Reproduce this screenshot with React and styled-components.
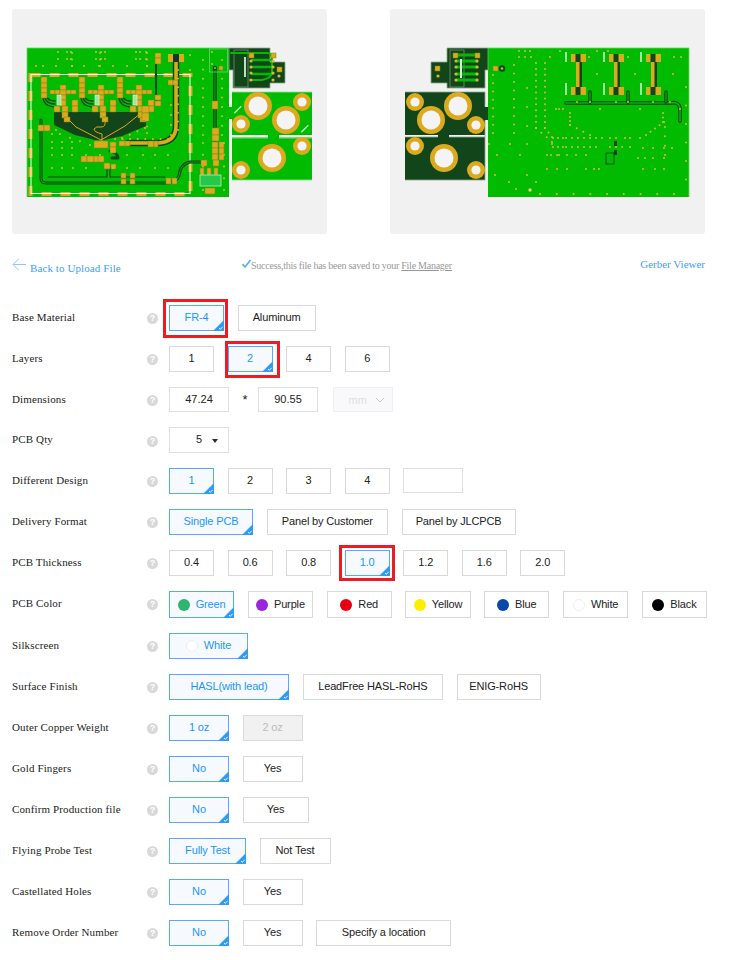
import styled, { createGlobalStyle } from 'styled-components';

const GOLD = '#dcaa1e';
const DARK = '#12451a';
const GREEN = '#01bb01';

const GlobalStyle = createGlobalStyle`
  body {
    margin: 0;
    background: #fff;
    font-family: "Liberation Serif", serif;
  }
`;

const Page = styled.div`
  width: 729px;
`;

const Previews = styled.div`
  display: flex;
  gap: 63px;
  padding: 9px 12px 0;
`;

const Preview = styled.div`
  width: 315px;
  height: 225px;
  background: #f1f1f1;
  border-radius: 3px;
  overflow: hidden;
  svg {
    display: block;
    filter: blur(0.5px);
  }
`;

const Notice = styled.div`
  display: grid;
  grid-template-columns: 230px 1fr auto;
  height: 71px;
  padding: 0 24px 0 12px;
  font-size: 11px;
  line-height: 14px;
`;

const BackLink = styled.a`
  display: flex;
  align-items: flex-start;
  gap: 3px;
  padding-top: 24px;
  color: #3f9dfb;
  letter-spacing: 0.1px;
  span {
    padding-top: 3px;
  }
`;

const Success = styled.div`
  display: flex;
  align-items: flex-start;
  padding-top: 24px;
  color: #999;
  svg {
    margin-top: 1px;
    flex: none;
  }
  span {
    padding-top: 1px;
    font-size: 10px;
    white-space: nowrap;
    letter-spacing: -0.25px;
  }
`;

const GerberLink = styled.a`
  padding-top: 23px;
  color: #3f9dfb;
`;

const Form = styled.div`
  padding-left: 12px;
`;

const Row = styled.div`
  display: flex;
  align-items: flex-start;
  height: ${(p) => p.$h || 41}px;
`;

const Label = styled.div`
  width: 135px;
  flex: none;
  height: 25px;
  line-height: 25px;
  font-size: 11px;
  letter-spacing: 0.13px;
  color: #222;
  white-space: nowrap;
`;

const Help = styled.span`
  flex: none;
  width: 11px;
  height: 11px;
  margin: ${(p) => p.$top || 8}px 11px 0 0;
  border-radius: 50%;
  background: #d9d9d9;
  color: #fff;
  font: bold 9px/11px "Liberation Sans", sans-serif;
  text-align: center;
`;

const Options = styled.div`
  display: flex;
  align-items: flex-start;
  gap: 13.55px;
`;

const Option = styled.div`
  position: relative;
  box-sizing: border-box;
  flex: none;
  display: flex;
  align-items: center;
  justify-content: center;
  gap: 6px;
  width: ${(p) => p.$w}px;
  height: ${(p) => (p.$tall ? 27 : 26)}px;
  padding-bottom: 2px;
  font: 11px "Liberation Sans", sans-serif;
  letter-spacing: -0.15px;
  white-space: nowrap;
  border: 1px solid ${(p) => (p.$active ? '#5aa9f8' : '#d9d9d9')};
  background: ${(p) => (p.$active ? '#f6faff' : p.$off ? '#f1f1f1' : '#fff')};
  color: ${(p) => (p.$active ? '#1b96fb' : p.$off ? '#bbb' : '#222')};
`;

const Corner = styled.svg`
  position: absolute;
  right: -1px;
  bottom: -1px;
`;

const Marker = styled.span`
  position: absolute;
  inset: ${(p) => p.$inset};
  border: 3px solid #ed1c24;
  pointer-events: none;
`;

const Dot = styled.i`
  flex: none;
  box-sizing: border-box;
  width: 12px;
  height: 12px;
  margin-top: 2px;
  border-radius: 50%;
  background: ${(p) => p.$color};
  border: ${(p) => (p.$color === '#fff' ? '1px solid #eee' : 'none')};
`;

const Field = styled.input`
  box-sizing: border-box;
  flex: none;
  width: 60px;
  height: 25px;
  padding: 0 0 1px;
  border: 1px solid #dcdfe6;
  border-radius: 0;
  outline: none;
  background: #fff;
  color: #222;
  font: 11px "Liberation Sans", sans-serif;
  text-align: center;
`;

const Times = styled.span`
  flex: 0 0 1.9px;
  min-width: 0;
  margin-top: 6px;
  font: 13px/14px "Liberation Sans", sans-serif;
  color: #222;
`;

const UnitSelect = styled.div`
  box-sizing: border-box;
  flex: none;
  display: flex;
  align-items: center;
  justify-content: space-between;
  width: 60px;
  height: 25px;
  margin-left: 1px;
  padding: 0 7px 0 15px;
  border: 1px solid #f0f0f4;
  background: #f9f9fb;
  color: #ddd;
  font: 11px "Liberation Sans", sans-serif;
`;

const QtySelect = styled.div`
  box-sizing: border-box;
  display: flex;
  align-items: center;
  width: 60px;
  height: 26px;
  padding: 0 10px 2px 26px;
  justify-content: space-between;
  border: 1px solid #dcdfe6;
  font: 11px "Liberation Sans", sans-serif;
  color: #222;
  &::after {
    content: '';
    border-left: 3.5px solid transparent;
    border-right: 3.5px solid transparent;
    border-top: 4px solid #2c2c3a;
    margin-top: 3px;
  }
`;

const Tick = () => (
  <Corner width="11" height="11" viewBox="0 0 11 11">
    <polygon points="11,0 11,11 0,11" fill="#2f9bf8" />
    <polyline points="6,8 7.4,9.3 9.6,6.8" fill="none" stroke="#fff" strokeWidth="0.9" />
  </Corner>
);

const Choice = ({ w, active, off, tall, mark, children }) => (
  <Option $w={w} $active={active} $off={off} $tall={tall}>
    {children}
    {active && <Tick />}
    {mark && <Marker $inset={mark} />}
  </Option>
);

// page coordinates are used inside the artwork: viewBox starts at the card corner
const spread = (x1, y1, x2, y2, n) =>
  Array.from({ length: n }, (_, i) => [x1 + ((x2 - x1) * i) / (n - 1), y1 + ((y2 - y1) * i) / (n - 1)]);

const Pads = ({ list, fill = GOLD }) => (
  <g fill={fill} stroke="#6f8a12" strokeWidth="0.5">
    {list.map(([x, y, w, h]) => (
      <rect key={`${x}-${y}-${w}-${h}`} x={x} y={y} width={w} height={h} />
    ))}
  </g>
);

const Vias = ({ pts, r = 1 }) => (
  <g fill="#d8b73c">
    {pts.map(([x, y], i) => (
      <circle key={i} cx={x} cy={y} r={r} />
    ))}
  </g>
);

const Trace = ({ d, w = 1.4, color = DARK }) => (
  <path d={d} fill="none" stroke={color} strokeWidth={w} strokeLinejoin="round" strokeLinecap="round" />
);

const Hole = ({ x, y, big }) => (
  <g>
    <circle cx={x} cy={y} r={big ? 14 : 9} fill={GOLD} />
    <circle cx={x} cy={y} r={big ? 9.5 : 4.6} fill="#f4f4f4" />
  </g>
);

const frontPads = [
  [155, 53, 6, 5], [155, 58, 6, 6],
  [168, 80, 5, 5], [173, 80, 5, 5],
  [155, 95, 6, 5], [155, 101, 6, 5],
  [38, 125, 6, 6], [44, 125, 6, 6],
  [142, 106, 7, 7], [142, 113, 7, 8],
  [110, 142, 6, 5], [110, 147, 6, 6], [119, 141, 7, 5], [125, 141, 5, 5], [148, 141, 6, 6], [154, 141, 4, 6],
  [94, 141, 14, 7],
  [81, 156, 6, 6], [87, 156, 7, 6], [94, 156, 7, 6], [98, 156, 6, 6],
  [104, 163, 6, 6], [111, 164, 5, 5],
  [121, 173, 5, 5], [130, 173, 5, 5], [121, 179, 5, 5], [130, 179, 5, 5],
  [166, 178, 5, 6], [172, 178, 5, 6],
  [201, 160, 6, 6], [200, 168, 4, 7], [207, 168, 4, 7], [214, 168, 4, 7],
  [205, 188, 10, 6],
  [212, 101, 6, 8],
  [212, 128, 7, 7], [212, 135, 7, 6],
  [212, 142, 6, 6], [219, 142, 5, 6], [212, 148, 6, 6], [219, 148, 5, 6], [212, 154, 6, 6], [219, 154, 5, 6], [213, 160, 6, 6],
];

const clusterPads = (dx) => [
  [41 + dx, 77, 6, 6], [41 + dx, 83, 6, 5], [41 + dx, 88, 6, 5], [41 + dx, 93, 6, 5],
  [50 + dx, 90, 5, 4], [55 + dx, 90, 5, 4], [66 + dx, 90, 5, 4], [71 + dx, 90, 5, 4],
  [60 + dx, 85, 6, 5], [60 + dx, 90, 6, 5], [60 + dx, 95, 6, 5], [60 + dx, 100, 6, 6],
  [54 + dx, 106, 6, 6], [62 + dx, 106, 6, 6],
  [72 + dx, 100, 6, 6], [72 + dx, 106, 6, 6],
  [62 + dx, 112, 6, 6], [64 + dx, 117, 6, 5],
];

const frontVias = [
  ...[52, 59].flatMap((y) => [58, 67, 71, 96, 101, 105, 136, 140, 146].map((x) => [x, y])),
  ...[36, 43, 56, 72, 84, 99, 113, 127, 147].map((x) => [x, 66]),
  ...spread(72, 53, 72, 66, 3), ...spread(100, 53, 100, 66, 3), ...spread(147, 53, 147, 66, 3),
  ...[52, 62, 72, 86, 100, 127, 143, 155, 168].map((x) => [x, 155]),
  ...[52, 62, 72].map((x) => [x, 142]), ...[52, 62, 72].map((x) => [x, 148]),
  ...[52, 62, 73, 86, 113, 127, 140, 155, 168].map((x) => [x, 168]),
  ...spread(115, 139, 168, 139, 8),
  ...spread(178, 70, 178, 130, 8), ...spread(171, 105, 171, 135, 4),
  ...spread(203, 60, 203, 135, 9), ...spread(222, 60, 222, 135, 9),
  ...spread(203, 143, 203, 190, 5), ...spread(224, 143, 224, 190, 5),
  ...spread(190, 55, 190, 70, 2), ...spread(212, 52, 212, 64, 2),
  ...spread(52, 134, 56, 130, 2), ...spread(147, 120, 147, 133, 3),
  ...spread(60, 134, 90, 145, 4), ...spread(122, 138, 145, 128, 4),
];

const FrontBoard = () => (
  <svg width="315" height="225" viewBox="12 9 315 225">
    <rect x="27" y="48" width="202" height="149" fill={GREEN} />
    <path d="M27 197V48H229" fill="none" stroke="#5fdc5f" strokeWidth="0.8" />
    <rect x="30.5" y="75" width="160" height="119" fill="none" stroke={GOLD} strokeWidth="4" strokeDasharray="10 9" />
    <rect x="31" y="74.5" width="159" height="119" fill="none" stroke="#fff" strokeWidth="1" />

    <polygon points="54,112 146,112 146,126 122,136 104,140 95,140 75,135 54,125" fill={DARK} />
    <Trace d="M101 140 L76 127 L62 113" color={GOLD} w="1" />
    <Trace d="M101 140 L125 126 L141 113" color={GOLD} w="1" />
    <Trace d="M102 140 V134 Q94 132 94 129 Q96 126 101 127 Q106 127 105 121 V113" color={GOLD} w="1" />

    {[0, 38, 76].map((dx) => (
      <g key={dx}>
        <Trace d={`M${43 + dx} 98 Q${44 + dx} 106 ${54 + dx} 107`} />
        <Trace d={`M${45 + dx} 98 Q${47 + dx} 104 ${55 + dx} 104`} />
        <Trace d={`M${47 + dx} 98 Q${50 + dx} 101 ${55 + dx} 101`} />
        <Pads list={clusterPads(dx)} />
        <rect x={57 + dx} y="95" width="4" height="10" fill="#9fe59f" stroke="#e8f8e8" strokeWidth="0.6" />
      </g>
    ))}

    <Trace d="M41 120 V178 Q41 183 46 183 H166 Q176 183 179 176 Q180 164 190 162 H204" w="3" />
    <Trace d="M41 120 V178 Q41 183 46 183 H166 Q176 183 179 176 Q180 164 190 162 H204" w="1.2" color="#08a008" />
    <Trace d="M107 168 V177 H48" w="1.2" />
    <Trace d="M110 169 V177 H165" w="1.2" />
    <Trace d="M156 60 V100" w="2" />
    <Trace d="M215 68 V140" w="3.6" />
    <Trace d="M215 68 V140" w="1.2" color="#08a008" />
    <Trace d="M176 58 V126 Q176 142 158 143 H128" w="6.5" />
    <Trace d="M176 58 V126 Q176 142 158 143 H128" w="3.5" color={GOLD} />
    <rect x="168" y="54" width="16" height="8" fill={GOLD} />
    <rect x="173" y="54" width="6" height="8" fill="#10391a" />
    <Trace d="M112 158 H118 Q117 152 110 151" w="3" />

    <Pads list={frontPads} />
    <Vias pts={frontVias} />

    <rect x="200" y="175" width="21" height="11" fill="#25c849" stroke="#b8eec0" strokeWidth="0.8" />
    <rect x="209.5" y="49" width="18" height="23" fill="none" stroke="#6edf6e" strokeWidth="0.7" />
    <circle cx="215" cy="68" r="2.2" fill={DARK} />
    <circle cx="215" cy="68" r="1" fill={GOLD} />
    <Pads list={[[219, 66, 4, 4]]} />

    {/* breakaway tab, top right */}
    <path d="M229 48H270V62H285V83H270V88H233V70H229Z" fill={DARK} stroke="#8aa98a" strokeWidth="0.8" />
    <rect x="234" y="50" width="14" height="37" fill="none" stroke="#7e9a7e" strokeWidth="0.7" />
    <Trace d="M231 53H268Q272 53 272 62V72Q272 78 262 80H250" w="2" color={GREEN} />
    {[60, 67, 74].map((y) => (
      <Trace key={y} d={`M252 ${y}H272`} w="2.4" color={GREEN} />
    ))}
    <Pads list={[[249, 53, 5, 5], [271, 53, 5, 5], [277, 67, 5, 5]]} />
    <Vias pts={[[251, 61], [251, 67], [251, 73], [251, 80], [273, 61], [273, 67], [273, 73], [273, 80], [279, 76]]} r="1.6" />
    <rect x="244" y="57" width="2" height="20" fill="#bfe0bf" />

    {/* round hole coupons */}
    <rect x="232" y="92" width="80" height="88" fill={GREEN} />
    <rect x="229" y="107" width="3" height="12" fill={GREEN} />
    <rect x="232" y="135" width="36" height="2.5" fill="#f1f1f1" />
    <rect x="279" y="135" width="33" height="2.5" fill="#f1f1f1" />
    <path d="M232 92H312M232 180H312M232 138H268M279 138H312" stroke="#8be48b" strokeWidth="0.8" />
    <Hole x={258} y={106} big />
    <Hole x={286} y={120} big />
    <Hole x={302} y={102} />
    <Hole x={241} y={124} />
    <Hole x={272} y={158} big />
    <Hole x={302} y={146} />
    <Hole x={241} y={170} />
    <rect x="233" y="109" width="10" height="1.4" fill="#bdeebd" transform="rotate(-45 238 110)" />
    <rect x="300" y="128" width="10" height="1.4" fill="#bdeebd" transform="rotate(-45 305 129)" />
  </svg>
);

const backVias = [
  ...spread(536, 63, 536, 128, 12), ...spread(545, 63, 545, 128, 12),
  ...spread(536, 128, 552, 142, 4), ...spread(545, 128, 552, 137, 3),
  ...[553, 558, 563, 566, 572, 578, 584, 590, 596].flatMap((x) => [[x, 138], [x, 147]]),
  ...[602, 610, 616, 625, 630, 640].map((x) => [x, 138]),
  ...[610, 616, 622, 630].map((x) => [x, 147]),
  ...spread(570, 113, 570, 125, 4), ...spread(570, 125, 590, 135, 4),
  ...spread(663, 113, 663, 122, 3), ...spread(664, 122, 646, 135, 5),
  ...spread(665, 127, 665, 155, 4),
  ...spread(493, 75, 493, 133, 8), ...spread(514, 65, 514, 133, 9),
  ...[527, 527, 527].map((x, i) => [x, 88 + i * 19]),
  ...[489, 510, 527, 552].map((x) => [x, 144]),
  ...[547, 557, 567, 576, 586].map((x) => [x, 155]),
  ...[547, 557, 567, 586, 594, 599].map((x) => [x, 169]),
  ...[643, 653, 664, 672].map((x) => [x, 148]),
  ...[638, 645, 653, 664].map((x) => [x, 158]),
  ...[643, 655, 664].map((x) => [x, 169]),
  ...[497, 520, 551, 559].map((x) => [x, 155]),
  ...[495, 509, 516, 527, 536].map((x, i) => [x, 175 + (i % 3) * 7]),
  ...spread(540, 194, 674, 194, 9),
  ...[686, 686, 686, 686, 686, 686].map((x, i) => [x, 87 + i * 18.5]),
  ...[519, 525, 530, 560, 597, 608].map((x) => [x, 51]),
  ...[519, 525, 531, 550, 589, 628, 674, 681].map((x) => [x, 57]),
  ...[597, 635, 673].map((x) => [x, 74]),
  ...[556, 559, 563, 600, 640, 680].map((x) => [x, 109]),
  ...[577, 616, 653, 590, 628, 670].map((x) => [x, 102]),
];

const backColumns = [578, 616, 653];

const BackBoard = () => (
  <svg width="315" height="225" viewBox="390 9 315 225">
    <rect x="488" y="48" width="201" height="149" fill={GREEN} />
    <path d="M488 48H689V197" fill="none" stroke="#5fdc5f" strokeWidth="0.8" />

    <Trace d="M566 103H670Q680 101 680 110V121" w="3.6" />
    <Trace d="M566 103H670Q680 101 680 110V121" w="1.6" color="#08b008" />
    {[590, 628, 666].map((x) => (
      <g key={x}>
        <Trace d={`M${x} 92V102`} w="3.5" />
        <Trace d={`M${x} 92V102`} w="1.2" color="#08b008" />
      </g>
    ))}
    <rect x="606" y="153" width="8" height="11" fill="none" stroke={DARK} strokeWidth="0.9" />
    <rect x="614" y="141" width="3" height="5" fill={DARK} />
    <rect x="614" y="150" width="3" height="5" fill={DARK} />

    {backColumns.map((x) => (
      <g key={x}>
        <rect x={x - 1} y="60" width="5" height="28" fill={DARK} />
        <rect x={x - 2} y="60" width="3.5" height="28" fill={GOLD} />
        <rect x={x - 7} y="54" width="15" height="8" fill={GOLD} />
        <rect x={x - 7} y="87" width="15" height="8" fill={GOLD} />
        <rect x={x - 2.5} y="54" width="5" height="8" fill={DARK} />
        <rect x={x - 2.5} y="87" width="5" height="8" fill={DARK} />
        <rect x={x - 13} y="52" width="2" height="10" fill="#d8f6d8" opacity="0.75" />
        <rect x={x - 13} y="83" width="2" height="12" fill="#d8f6d8" opacity="0.75" />
      </g>
    ))}

    <Vias pts={backVias} />
    <Pads list={[[493, 66, 5, 5]]} />
    <circle cx="502" cy="68.5" r="3.2" fill={DARK} />
    <circle cx="502" cy="68.5" r="1.3" fill={GOLD} />
    <circle cx="530" cy="190" r="1.7" fill="#f1d678" />

    {/* breakaway tab, top left */}
    <path d="M488 48H447V62H431V83H447V88H485V70H488Z" fill={DARK} stroke="#8aa98a" strokeWidth="0.8" />
    <rect x="450" y="50" width="14" height="37" fill="none" stroke="#7e9a7e" strokeWidth="0.7" />
    {[55, 61, 67, 74, 80].map((y) => (
      <Trace key={y} d={`M457 ${y}H477`} w="3" color={GREEN} />
    ))}
    <Pads list={[[453, 53, 5, 5], [475, 53, 5, 5], [435, 66, 5, 5]]} />
    <Vias pts={[[456, 61], [456, 67], [456, 74], [456, 80], [477, 61], [477, 67], [477, 74], [477, 80], [438, 76]]} r="1.6" />
    <rect x="460" y="59" width="2" height="19" fill="#d6efd6" />

    {/* round hole coupons */}
    <path d="M405 92H485V107H488V120H485V135H449V137H485V180H405V137H438V135H405Z" fill={DARK} />
    <path d="M405 92H485V107M485 120V180H405M405 137H438M449 137H485" fill="none" stroke="#8aa98a" strokeWidth="0.8" />
    <Hole x={458} y={106} big />
    <Hole x={431} y={120} big />
    <Hole x={415} y={102} />
    <Hole x={476} y={125} />
    <Hole x={415} y={146} />
    <Hole x={444} y={158} big />
    <Hole x={476} y={170} />
  </svg>
);

const colors = [
  ['Green', '#2fb36d', true],
  ['Purple', '#9b26d9'],
  ['Red', '#e60012'],
  ['Yellow', '#ffee00'],
  ['Blue', '#0a47a6'],
  ['White', '#fff'],
  ['Black', '#000'],
];

const simpleRows = {
  'Base Material': [
    { text: 'FR-4', w: 55, active: true, mark: '-7px -5px -8px -7px' },
    { text: 'Aluminum', w: 78 },
  ],
  Layers: [
    { text: '1', w: 45 },
    { text: '2', w: 45, active: true, mark: '-6px -8px -7px -4px' },
    { text: '4', w: 45 },
    { text: '6', w: 45 },
  ],
  'Delivery Format': [
    { text: 'Single PCB', w: 84, active: true },
    { text: 'Panel by Customer', w: 121.5 },
    { text: 'Panel by JLCPCB', w: 114 },
  ],
  'PCB Thickness': [
    { text: '0.4', w: 45 },
    { text: '0.6', w: 45 },
    { text: '0.8', w: 45 },
    { text: '1.0', w: 45, active: true, mark: '-6px -6px -6px -7px' },
    { text: '1.2', w: 45 },
    { text: '1.6', w: 45 },
    { text: '2.0', w: 45 },
  ],
};

const lowerRows = [
  ['Surface Finish', [
    { text: 'HASL(with lead)', w: 120, active: true },
    { text: 'LeadFree HASL-RoHS', w: 140.5 },
    { text: 'ENIG-RoHS', w: 84 },
  ]],
  ['Outer Copper Weight', [
    { text: '1 oz', w: 60, active: true },
    { text: '2 oz', w: 60, off: true },
  ]],
  ['Gold Fingers', [
    { text: 'No', w: 60, active: true },
    { text: 'Yes', w: 60 },
  ]],
  ['Confirm Production file', [
    { text: 'No', w: 60, active: true },
    { text: 'Yes', w: 66 },
  ]],
  ['Flying Probe Test', [
    { text: 'Fully Test', w: 77, active: true },
    { text: 'Not Test', w: 71 },
  ]],
  ['Castellated Holes', [
    { text: 'No', w: 60, active: true },
    { text: 'Yes', w: 60 },
  ]],
  ['Remove Order Number', [
    { text: 'No', w: 60, active: true },
    { text: 'Yes', w: 60 },
    { text: 'Specify a location', w: 135 },
  ]],
];

const FormRow = ({ label, h, helpTop, children }) => (
  <Row $h={h}>
    <Label>{label}</Label>
    <Help $top={helpTop}>?</Help>
    <Options>{children}</Options>
  </Row>
);

const ChoiceRow = ({ label, items }) => (
  <FormRow label={label}>
    {items.map((item) => (
      <Choice key={item.text} w={item.w} active={item.active} off={item.off} mark={item.mark}>
        {item.text}
      </Choice>
    ))}
  </FormRow>
);

export default function App() {
  return (
    <Page>
      <GlobalStyle />
      <Previews>
        <Preview><FrontBoard /></Preview>
        <Preview><BackBoard /></Preview>
      </Previews>

      <Notice>
        <BackLink>
          <svg width="15" height="14" viewBox="0 0 15 14">
            <path d="M14 6.5H1.5M6.5 1L1 6.5L6.5 12" fill="none" stroke="#8cc4fb" strokeWidth="1" />
          </svg>
          <span>Back to Upload File</span>
        </BackLink>
        <Success>
          <svg width="9" height="10" viewBox="0 0 9 10">
            <path d="M0.5 5L3 8L8.5 1" fill="none" stroke="#5aa9f8" strokeWidth="1.6" />
          </svg>
          <span>Success,this file has been saved to your <u>File Manager</u></span>
        </Success>
        <GerberLink>Gerber Viewer</GerberLink>
      </Notice>

      <Form>
        <ChoiceRow label="Base Material" items={simpleRows['Base Material']} />
        <ChoiceRow label="Layers" items={simpleRows.Layers} />
        <FormRow label="Dimensions" h={40}>
          <Field readOnly value="47.24" />
          <Times>*</Times>
          <Field readOnly value="90.55" />
          <UnitSelect>
            mm
            <svg width="10" height="6" viewBox="0 0 10 6">
              <path d="M1 1L5 5L9 1" fill="none" stroke="#ccc" strokeWidth="1" />
            </svg>
          </UnitSelect>
        </FormRow>
        <FormRow label="PCB Qty" helpTop={9}>
          <QtySelect>5</QtySelect>
        </FormRow>
        <FormRow label="Different Design">
          {['1', '2', '3', '4'].map((n) => (
            <Choice key={n} w={45} active={n === '1'}>{n}</Choice>
          ))}
          <Field readOnly value="" />
        </FormRow>
        <ChoiceRow label="Delivery Format" items={simpleRows['Delivery Format']} />
        <ChoiceRow label="PCB Thickness" items={simpleRows['PCB Thickness']} />
        <FormRow label="PCB Color" h={42}>
          {colors.map(([name, color, active]) => (
            <Choice key={name} w={65.25} tall active={active}>
              <Dot $color={color} />
              {name}
            </Choice>
          ))}
        </FormRow>
        <FormRow label="Silkscreen">
          <Choice w={79} active>
            <Dot $color="#fff" />
            White
          </Choice>
        </FormRow>
        {lowerRows.map(([label, items]) => (
          <ChoiceRow key={label} label={label} items={items} />
        ))}
      </Form>
    </Page>
  );
}
